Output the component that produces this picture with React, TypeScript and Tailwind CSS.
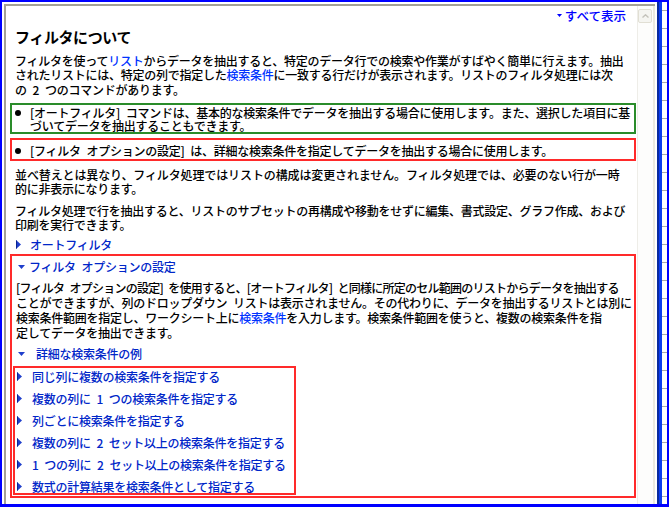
import React from "react";

const TriRight = () => (
  <svg width="5" height="9" viewBox="0 0 5 9" className="shrink-0">
    <polygon points="0,0 5,4.5 0,9" fill="#1f3fcc" />
    <rect x="0" y="0.5" width="1" height="8" fill="#0b2490" />
  </svg>
);

const TriDown = () => (
  <svg width="7" height="4" viewBox="0 0 7 4" className="shrink-0">
    <polygon points="0,0 7,0 3.5,4" fill="#1f3fcc" />
  </svg>
);

const Bullet = () => (
  <div className="w-[15px] shrink-0 flex">
    <span className="mt-[4px] w-[6px] h-[6px] rounded-full bg-black" />
  </div>
);

const S = "\u2002";

const items = [
  "同じ列に複数の検索条件を指定する",
  `複数の列に${S}1${S}つの検索条件を指定する`,
  "列ごとに検索条件を指定する",
  `複数の列に${S}2${S}セット以上の検索条件を指定する`,
  `1${S}つの列に${S}2${S}セット以上の検索条件を指定する`,
  "数式の計算結果を検索条件として指定する",
];

export default function App() {
  const ticks = Array.from({ length: 28 });
  return (
    <div className="w-[669px] h-[507px] overflow-hidden bg-white border-t-2 border-l-2 border-r-2 border-b-[3px] border-[#0000ff] flex font-['Noto_Sans_CJK_JP',sans-serif] font-medium text-[12px] text-black">
      {/* main window */}
      <div className="w-[655px] h-full shrink-0 pl-[2px] pt-[2px] pr-[2px] flex">
        <div className="flex-1 flex border-t-2 border-l-2 border-[#a3a196] min-w-0">
          {/* content */}
          <div className="w-[631px] h-full shrink-0 overflow-hidden">
            <div className="mt-[2px] pr-[11px] flex justify-end items-center leading-[15px] text-[12.5px] text-[#0000ff]">
              <svg width="5" height="3" viewBox="0 0 5 3" className="shrink-0">
                <polygon points="0,0 5,0 2.5,3" fill="#0000ff" />
              </svg>
              <span className="ml-[3px]">すべて表示</span>
            </div>

            <h1 className="mt-[5px] ml-[9px] text-[15px] leading-[18px] font-bold tracking-[-0.4px]">
              フィルタについて
            </h1>

            <div className="mt-[7.5px] ml-[9px] leading-[14.5px] whitespace-nowrap tracking-[-0.25px]">
              <div>
                フィルタを使って<span className="text-[#0033ff]">リスト</span>からデータを抽出すると、特定のデータ行での検索や作業がすばやく簡単に行えます。抽出
              </div>
              <div>
                されたリストには、特定の列で指定した<span className="text-[#0033ff]">検索条件</span>に一致する行だけが表示されます。リストのフィルタ処理には次
              </div>
              <div>の{S}2{S}つのコマンドがあります。</div>
            </div>

            <div className="mt-[6px] ml-[4px] mr-[1px] border-2 border-[#2a8c2a] pt-[1px] pl-[3px] flex leading-[13px] whitespace-nowrap tracking-[-0.25px]">
              <Bullet />
              <div>
                <div>[オートフィルタ]{S}コマンドは、基本的な検索条件でデータを抽出する場合に使用します。また、選択した項目に基</div>
                <div>づいてデータを抽出することもできます。</div>
              </div>
            </div>

            <div className="mt-[4px] ml-[4px] mr-[1px] border-2 border-[#ff2a2a] pt-[4px] pb-[2px] pl-[3px] flex leading-[13px] whitespace-nowrap tracking-[-0.25px]">
              <Bullet />
              <div>[フィルタ{S}オプションの設定]{S}は、詳細な検索条件を指定してデータを抽出する場合に使用します。</div>
            </div>

            <div className="mt-[7px] ml-[9px] leading-[14px] whitespace-nowrap tracking-[-0.25px]">
              <div className="tracking-[-0.12px]">並べ替えとは異なり、フィルタ処理ではリストの構成は変更されません。フィルタ処理では、必要のない行が一時</div>
              <div>的に非表示になります。</div>
            </div>

            <div className="mt-[7.5px] ml-[9px] leading-[14px] whitespace-nowrap tracking-[-0.25px]">
              <div>フィルタ処理で行を抽出すると、リストのサブセットの再構成や移動をせずに編集、書式設定、グラフ作成、および</div>
              <div>印刷を実行できます。</div>
            </div>

            <div className="mt-[6px] ml-[10px] flex items-center leading-[14px] text-[#0026c8] tracking-[-0.25px]">
              <TriRight />
              <span className="ml-[9px]">オートフィルタ</span>
            </div>

            <div className="mt-[2.5px] ml-[4px] mr-[1px] border-2 border-[#ff2a2a] pt-[4px] pb-[1px]">
              <div className="ml-[6px] flex items-center leading-[14px] text-[#0026c8] tracking-[-0.25px]">
                <TriDown />
                <span className="ml-[4px]">フィルタ{S}オプションの設定</span>
              </div>

              <div className="mt-[6px] ml-[4px] leading-[15px] whitespace-nowrap tracking-[-0.25px]">
                <div className="tracking-[-0.75px]">[フィルタ{S}オプションの設定]{S}を使用すると、[オートフィルタ]{S}と同様に所定のセル範囲のリストからデータを抽出する</div>
                <div>ことができますが、列のドロップダウン{S}リストは表示されません。その代わりに、データを抽出するリストとは別に</div>
                <div>
                  検索条件範囲を指定し、ワークシート上に<span className="text-[#0033ff]">検索条件</span>を入力します。検索条件範囲を使うと、複数の検索条件を指
                </div>
                <div>定してデータを抽出できます。</div>
              </div>

              <div className="mt-[7px] ml-[6px] flex items-center leading-[14px] text-[#0026c8] tracking-[-0.25px]">
                <TriDown />
                <span className="ml-[11px]">詳細な検索条件の例</span>
              </div>

              <div className="mt-[4.5px] ml-[1px] w-[283px] border-2 border-[#ff2a2a] pt-[2px] flex flex-col gap-[9px]">
                {items.map((t) => (
                  <div key={t} className="ml-[2px] flex items-center leading-[13px] text-[#0026c8] whitespace-nowrap tracking-[-0.25px]">
                    <TriRight />
                    <span className="ml-[10px]">{t}</span>
                  </div>
                ))}
              </div>
            </div>
          </div>

          {/* scrollbar */}
          <div className="w-[18px] h-full shrink-0 bg-[#fdfdfc] border-l border-[#eeede8] border-r-2 border-r-[#ebe9df] flex flex-col">
            <div className="mt-[3px] w-[14px] h-[14px] rounded-[2px] border border-[#e1dfd4] bg-[#f5f5f1] flex items-center justify-center">
              <svg width="7" height="4" viewBox="0 0 7 4">
                <polyline points="0.5,3.5 3.5,0.8 6.5,3.5" fill="none" stroke="#c4c3bb" strokeWidth="1.4" />
              </svg>
            </div>
          </div>
        </div>
      </div>

      {/* blue divider */}
      <div className="w-[2px] h-full shrink-0 bg-[#0a2a9e]" />
      <div className="w-[3px] h-full shrink-0 bg-[#0a3cf0]" />

      {/* tick column */}
      <div className="w-[5px] h-full shrink-0 pt-[8px] flex flex-col overflow-hidden">
        {ticks.map((_, i) => (
          <div key={i} className="h-[18px] shrink-0 border-t border-[#a9a9a9]" />
        ))}
      </div>
    </div>
  );
}
